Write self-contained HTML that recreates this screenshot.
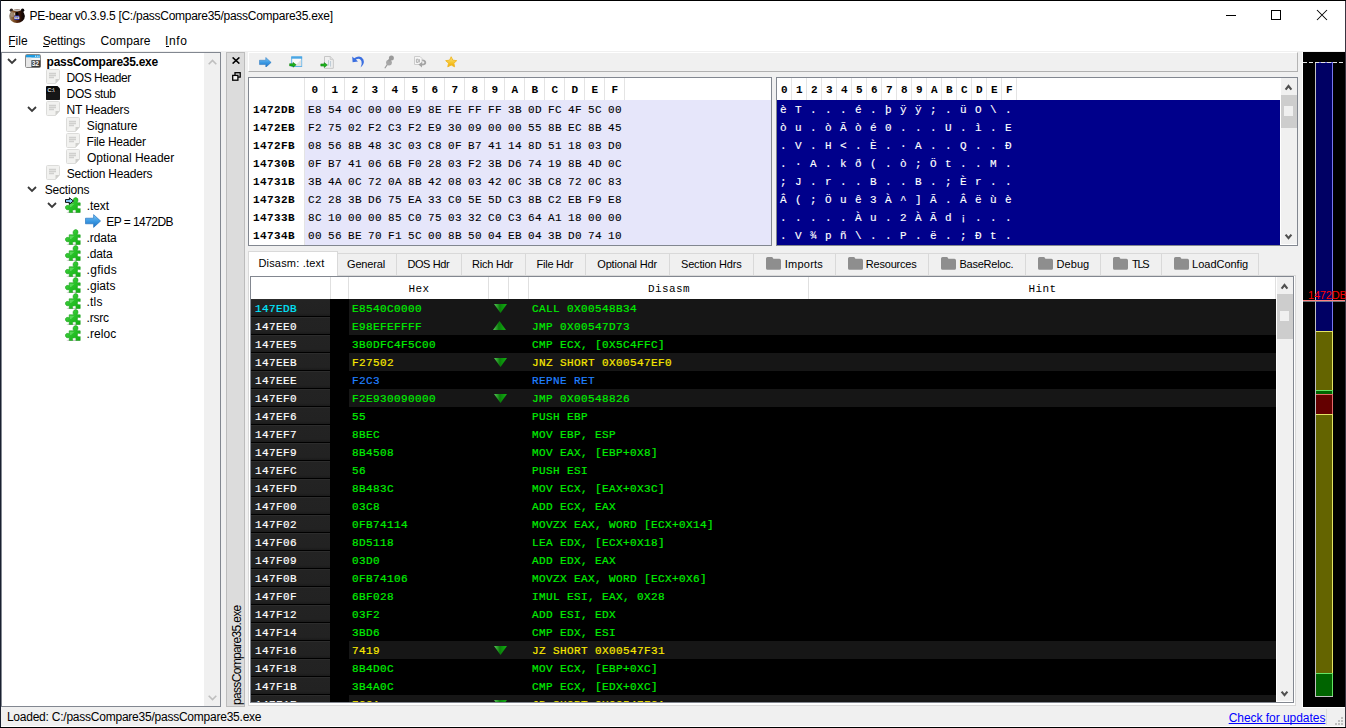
<!DOCTYPE html>
<html>
<head>
<meta charset="utf-8">
<title>PE-bear</title>
<style>
*{box-sizing:border-box;margin:0;padding:0}
html,body{width:1346px;height:728px;overflow:hidden;background:#f0f0f0;font-family:"Liberation Sans",sans-serif;font-size:12px;color:#000}
div,svg{position:absolute}
#win{left:0;top:0;width:1346px;height:728px;background:#f0f0f0;overflow:hidden}
.t{white-space:nowrap;font-size:12px;line-height:16px;height:16px}
.m{font-family:"Liberation Mono",monospace;white-space:nowrap;font-size:11px;letter-spacing:.4px;line-height:18px;height:18px}
.b{font-weight:bold}
.md{-webkit-text-stroke:.2px currentColor}
.h{-webkit-text-stroke:.1px #000}
.a{width:15px;text-align:center;color:#fff;-webkit-text-stroke:.15px #fff}
u{text-decoration:none;border-bottom:1px solid #000}
.ac{left:0;width:79px;height:17px;background:linear-gradient(#2c2c2c 0,#2c2c2c 1px,#232323 1px,#222 14px,#1b1b1b 17px)}
.sb{background:#f0f0f0}
.th{background:#cdcdcd}
</style>
</head>
<body>
<div id="win">

<div style="left:0;top:0;width:1346px;height:51px;background:#fff"></div>
<svg style="left:9px;top:8px" width="16" height="15" viewBox="0 0 16 15">
<defs><linearGradient id="bg" x1="0" y1="0" x2="1" y2="0"><stop offset="0" stop-color="#9a9286"/><stop offset=".25" stop-color="#86582c"/><stop offset=".55" stop-color="#52220a"/><stop offset=".8" stop-color="#1c0a04"/><stop offset="1" stop-color="#080202"/></linearGradient></defs>
<circle cx="2.4" cy="2.2" r="1.7" fill="#2a2220"/><circle cx="13.6" cy="2.2" r="1.7" fill="#0c0606"/>
<ellipse cx="8" cy="8.1" rx="7.9" ry="6.8" fill="url(#bg)"/>
<path d="M3.6 2.6 Q8 .6 12.4 2.6 Q8 4.2 3.6 2.6Z" fill="#c4c0bc"/>
<ellipse cx="3.6" cy="6.6" rx="2" ry="2.6" fill="#b0a898" opacity=".55"/>
<path d="M5.2 4.6 Q6.4 4 6.4 7 L5.4 7.6Z" fill="#f0ece4" opacity=".9"/>
<ellipse cx="8" cy="5.9" rx="1.6" ry="2.2" fill="#050202"/>
<rect x="5.3" y="7.5" width="5.1" height="4.6" rx="1.3" fill="#2c34b4"/>
<rect x="5.5" y="8.6" width="4.7" height="2.4" fill="#f6f6ff"/>
<rect x="6.5" y="9.2" width="1" height="1.3" fill="#222"/><rect x="8.3" y="9.2" width="1" height="1.3" fill="#222"/>
</svg>
<div class="t" style="left:29.62px;letter-spacing:-0.271px;top:8px;font-size:12px;">PE-bear v0.3.9.5 [C:/passCompare35/passCompare35.exe]</div>
<div style="left:1226px;top:15px;width:10px;height:1px;background:#000"></div>
<div style="left:1271px;top:10px;width:10px;height:10px;border:1px solid #000"></div>
<svg style="left:1316px;top:9px" width="12" height="12" viewBox="0 0 12 12"><path d="M1 1 L11 11 M11 1 L1 11" stroke="#000" stroke-width="1.05" fill="none"/></svg>
<div class="t" style="left:8.22px;letter-spacing:0.025px;top:33px;font-size:12px;">File</div>
<div style="left:9px;top:46px;width:6px;height:1px;background:#000"></div>
<div class="t" style="left:42.66px;letter-spacing:-0.112px;top:33px;font-size:12px;">Settings</div>
<div style="left:43px;top:46px;width:6px;height:1px;background:#000"></div>
<div class="t" style="left:100.59px;letter-spacing:0.097px;top:33px;font-size:12px;">Compare</div>
<div class="t" style="left:164.89px;letter-spacing:0.699px;top:33px;font-size:12px;">Info</div>
<div style="left:166px;top:46px;width:3px;height:1px;background:#000"></div>
<div style="left:1px;top:52px;width:220px;height:655px;background:#fff;border:1px solid #828790"></div>
<div class="sb" style="left:204px;top:53px;width:16px;height:653px"></div>
<svg style="left:208px;top:59px" width="9" height="6" viewBox="0 0 9 6"><path d="M0.7 5.2 L4.5 1.4 L8.3 5.2" stroke="#bfbfbf" stroke-width="1.6" fill="none"/></svg>
<svg style="left:208px;top:695px" width="9" height="6" viewBox="0 0 9 6"><path d="M0.7 0.8 L4.5 4.6 L8.3 0.8" stroke="#bfbfbf" stroke-width="1.6" fill="none"/></svg>
<svg style="left:7px;top:58px" width="10" height="7" viewBox="0 0 10 7"><path d="M1 1 L5 5 L9 1" stroke="#3a3a3a" stroke-width="1.8" fill="none"/></svg>
<svg style="left:25px;top:54px" width="16" height="14" viewBox="0 0 16 14"><rect x=".5" y=".5" width="15" height="13" rx="1.2" fill="#f4f4f4" stroke="#8c8c8c"/><rect x="1" y="1" width="14" height="2.6" fill="#1e9be0"/><rect x="10" y="1.7" width="1" height="1" fill="#fff"/><rect x="11.8" y="1.7" width="1" height="1" fill="#fff"/><rect x="13.5" y="1.7" width="1" height="1" fill="#fff"/><rect x="1" y="3.6" width="5.4" height="9.4" fill="#e6e6e6"/><rect x="6.4" y="6.2" width="9" height="7" fill="#3a3a3a"/><text x="6.8" y="12.2" font-family="Liberation Sans" font-size="6.6" font-weight="bold" fill="#fff" letter-spacing="-.2">32</text></svg>
<div class="t" style="left:46.61px;letter-spacing:-0.286px;top:54px;font-size:12px;font-weight:bold;">passCompare35.exe</div>
<svg style="left:46px;top:69.4px" width="14" height="15" viewBox="0 0 14 15"><path d="M1.5 .5 H12.5 Q13.5 .5 13.5 1.5 V10 L9.5 14.5 H1.5 Q.5 14.5 .5 13.5 V1.5 Q.5 .5 1.5 .5Z" fill="#f2f2f0" stroke="#dcdcda" stroke-width="1"/><path d="M13.5 10 L9.5 14.5 V10Z" fill="#cfcfcc"/><path d="M3 4.5H10M3 6.5H10M3 8.5H8" stroke="#d0d0ce" stroke-width="1.4"/></svg>
<div class="t" style="left:66.62px;letter-spacing:-0.458px;top:70px;font-size:12px;">DOS Header</div>
<svg style="left:46px;top:86px" width="14" height="14" viewBox="0 0 14 14"><path d="M1 0H11.5L14 2.5V13Q14 14 13 14H1Q0 14 0 13V1Q0 0 1 0Z" fill="#0a0a0a"/><path d="M0 8 L14 3 V13 Q14 14 13 14 H1 Q0 14 0 13Z" fill="#1c1c1c" opacity=".7"/><text x="1.6" y="5.6" font-family="Liberation Sans" font-size="5.2" font-weight="bold" fill="#e8e8e8">C:\</text></svg>
<div class="t" style="left:66.62px;letter-spacing:-0.378px;top:86px;font-size:12px;">DOS stub</div>
<svg style="left:27px;top:106px" width="10" height="7" viewBox="0 0 10 7"><path d="M1 1 L5 5 L9 1" stroke="#3a3a3a" stroke-width="1.8" fill="none"/></svg>
<svg style="left:46px;top:101.4px" width="14" height="15" viewBox="0 0 14 15"><path d="M1.5 .5 H12.5 Q13.5 .5 13.5 1.5 V10 L9.5 14.5 H1.5 Q.5 14.5 .5 13.5 V1.5 Q.5 .5 1.5 .5Z" fill="#f2f2f0" stroke="#dcdcda" stroke-width="1"/><path d="M13.5 10 L9.5 14.5 V10Z" fill="#cfcfcc"/><path d="M3 4.5H10M3 6.5H10M3 8.5H8" stroke="#d0d0ce" stroke-width="1.4"/></svg>
<div class="t" style="left:66.62px;letter-spacing:-0.185px;top:102px;font-size:12px;">NT Headers</div>
<svg style="left:66px;top:117.4px" width="14" height="15" viewBox="0 0 14 15"><path d="M1.5 .5 H12.5 Q13.5 .5 13.5 1.5 V10 L9.5 14.5 H1.5 Q.5 14.5 .5 13.5 V1.5 Q.5 .5 1.5 .5Z" fill="#f2f2f0" stroke="#dcdcda" stroke-width="1"/><path d="M13.5 10 L9.5 14.5 V10Z" fill="#cfcfcc"/><path d="M3 4.5H10M3 6.5H10M3 8.5H8" stroke="#d0d0ce" stroke-width="1.4"/></svg>
<div class="t" style="left:86.76px;letter-spacing:-0.075px;top:118px;font-size:12px;">Signature</div>
<svg style="left:66px;top:133.4px" width="14" height="15" viewBox="0 0 14 15"><path d="M1.5 .5 H12.5 Q13.5 .5 13.5 1.5 V10 L9.5 14.5 H1.5 Q.5 14.5 .5 13.5 V1.5 Q.5 .5 1.5 .5Z" fill="#f2f2f0" stroke="#dcdcda" stroke-width="1"/><path d="M13.5 10 L9.5 14.5 V10Z" fill="#cfcfcc"/><path d="M3 4.5H10M3 6.5H10M3 8.5H8" stroke="#d0d0ce" stroke-width="1.4"/></svg>
<div class="t" style="left:86.62px;letter-spacing:-0.265px;top:134px;font-size:12px;">File Header</div>
<svg style="left:66px;top:149.4px" width="14" height="15" viewBox="0 0 14 15"><path d="M1.5 .5 H12.5 Q13.5 .5 13.5 1.5 V10 L9.5 14.5 H1.5 Q.5 14.5 .5 13.5 V1.5 Q.5 .5 1.5 .5Z" fill="#f2f2f0" stroke="#dcdcda" stroke-width="1"/><path d="M13.5 10 L9.5 14.5 V10Z" fill="#cfcfcc"/><path d="M3 4.5H10M3 6.5H10M3 8.5H8" stroke="#d0d0ce" stroke-width="1.4"/></svg>
<div class="t" style="left:87.03px;letter-spacing:-0.009px;top:150px;font-size:12px;">Optional Header</div>
<svg style="left:46px;top:165.4px" width="14" height="15" viewBox="0 0 14 15"><path d="M1.5 .5 H12.5 Q13.5 .5 13.5 1.5 V10 L9.5 14.5 H1.5 Q.5 14.5 .5 13.5 V1.5 Q.5 .5 1.5 .5Z" fill="#f2f2f0" stroke="#dcdcda" stroke-width="1"/><path d="M13.5 10 L9.5 14.5 V10Z" fill="#cfcfcc"/><path d="M3 4.5H10M3 6.5H10M3 8.5H8" stroke="#d0d0ce" stroke-width="1.4"/></svg>
<div class="t" style="left:66.76px;letter-spacing:-0.217px;top:166px;font-size:12px;">Section Headers</div>
<svg style="left:27px;top:186px" width="10" height="7" viewBox="0 0 10 7"><path d="M1 1 L5 5 L9 1" stroke="#3a3a3a" stroke-width="1.8" fill="none"/></svg>
<div class="t" style="left:44.76px;letter-spacing:-0.193px;top:182px;font-size:12px;">Sections</div>
<svg style="left:47px;top:202px" width="10" height="7" viewBox="0 0 10 7"><path d="M1 1 L5 5 L9 1" stroke="#3a3a3a" stroke-width="1.8" fill="none"/></svg>
<svg style="left:65px;top:197px" width="16" height="16" viewBox="0 0 16 16"><defs><linearGradient id="pz10" x1="0" y1="0" x2="1" y2="1"><stop offset="0" stop-color="#5ce25c"/><stop offset=".45" stop-color="#2cc42c"/><stop offset="1" stop-color="#12b012"/></linearGradient></defs>
<ellipse cx="8.5" cy="15.5" rx="7" ry=".7" fill="#b0b0b0" opacity=".7"/>
<path d="M4.2 5.8 H8.9 Q7.6 4.4 8.2 2.6 Q9 .4 11 .6 Q13.2 1 13 3.2 Q12.8 4.8 12 5.8 H15.2 V8.6 Q13.6 7.6 12.6 8.8 Q11.8 10.4 13 11.6 Q14 12.2 15.2 11.6 V15.4 H10.8 Q11.6 13.6 10.2 12.8 Q8.4 12.4 7.6 13.6 Q7.2 14.4 7.8 15.4 H4.2 V12.2 Q2.8 13.2 1.4 12.4 Q-.1 11.2 .6 9.4 Q1.8 7.6 4.2 8.8Z" fill="url(#pz10)" stroke="#1ea01e" stroke-width=".6"/>
<path d="M5 6.8 H9.6 L6 10 H5Z" fill="#8cf08c" opacity=".45"/>
<path d="M.5 2.6H4.4V.8L8.4 4L4.4 7.2V5.4H.5Z" fill="#8cd0ff" stroke="#000" stroke-width=".95"/></svg>
<div class="t" style="left:86.70px;letter-spacing:-0.076px;top:198px;font-size:12px;">.text</div>
<svg style="left:85px;top:214px" width="16" height="14" viewBox="0 0 16 14"><defs><linearGradient id="ar11" x1="0" y1="0" x2="0" y2="1"><stop offset="0" stop-color="#7cc6f6"/><stop offset=".5" stop-color="#3c9ae4"/><stop offset="1" stop-color="#1c72c4"/></linearGradient></defs><path d="M.5 4.2 H8.6 V.6 L15.6 7 L8.6 13.4 V9.8 H.5Z" fill="url(#ar11)" stroke="#1a6ab8" stroke-width=".6"/></svg>
<div class="t" style="left:106.32px;letter-spacing:-0.563px;top:214px;font-size:12px;">EP = 1472DB</div>
<svg style="left:65px;top:229px" width="16" height="16" viewBox="0 0 16 16"><defs><linearGradient id="pz12" x1="0" y1="0" x2="1" y2="1"><stop offset="0" stop-color="#5ce25c"/><stop offset=".45" stop-color="#2cc42c"/><stop offset="1" stop-color="#12b012"/></linearGradient></defs>
<ellipse cx="8.5" cy="15.5" rx="7" ry=".7" fill="#b0b0b0" opacity=".7"/>
<path d="M4.2 5.8 H8.9 Q7.6 4.4 8.2 2.6 Q9 .4 11 .6 Q13.2 1 13 3.2 Q12.8 4.8 12 5.8 H15.2 V8.6 Q13.6 7.6 12.6 8.8 Q11.8 10.4 13 11.6 Q14 12.2 15.2 11.6 V15.4 H10.8 Q11.6 13.6 10.2 12.8 Q8.4 12.4 7.6 13.6 Q7.2 14.4 7.8 15.4 H4.2 V12.2 Q2.8 13.2 1.4 12.4 Q-.1 11.2 .6 9.4 Q1.8 7.6 4.2 8.8Z" fill="url(#pz12)" stroke="#1ea01e" stroke-width=".6"/>
<path d="M5 6.8 H9.6 L6 10 H5Z" fill="#8cf08c" opacity=".45"/>
</svg>
<div class="t" style="left:86.60px;letter-spacing:-0.098px;top:230px;font-size:12px;">.rdata</div>
<svg style="left:65px;top:245px" width="16" height="16" viewBox="0 0 16 16"><defs><linearGradient id="pz13" x1="0" y1="0" x2="1" y2="1"><stop offset="0" stop-color="#5ce25c"/><stop offset=".45" stop-color="#2cc42c"/><stop offset="1" stop-color="#12b012"/></linearGradient></defs>
<ellipse cx="8.5" cy="15.5" rx="7" ry=".7" fill="#b0b0b0" opacity=".7"/>
<path d="M4.2 5.8 H8.9 Q7.6 4.4 8.2 2.6 Q9 .4 11 .6 Q13.2 1 13 3.2 Q12.8 4.8 12 5.8 H15.2 V8.6 Q13.6 7.6 12.6 8.8 Q11.8 10.4 13 11.6 Q14 12.2 15.2 11.6 V15.4 H10.8 Q11.6 13.6 10.2 12.8 Q8.4 12.4 7.6 13.6 Q7.2 14.4 7.8 15.4 H4.2 V12.2 Q2.8 13.2 1.4 12.4 Q-.1 11.2 .6 9.4 Q1.8 7.6 4.2 8.8Z" fill="url(#pz13)" stroke="#1ea01e" stroke-width=".6"/>
<path d="M5 6.8 H9.6 L6 10 H5Z" fill="#8cf08c" opacity=".45"/>
</svg>
<div class="t" style="left:86.60px;letter-spacing:-0.152px;top:246px;font-size:12px;">.data</div>
<svg style="left:65px;top:261px" width="16" height="16" viewBox="0 0 16 16"><defs><linearGradient id="pz14" x1="0" y1="0" x2="1" y2="1"><stop offset="0" stop-color="#5ce25c"/><stop offset=".45" stop-color="#2cc42c"/><stop offset="1" stop-color="#12b012"/></linearGradient></defs>
<ellipse cx="8.5" cy="15.5" rx="7" ry=".7" fill="#b0b0b0" opacity=".7"/>
<path d="M4.2 5.8 H8.9 Q7.6 4.4 8.2 2.6 Q9 .4 11 .6 Q13.2 1 13 3.2 Q12.8 4.8 12 5.8 H15.2 V8.6 Q13.6 7.6 12.6 8.8 Q11.8 10.4 13 11.6 Q14 12.2 15.2 11.6 V15.4 H10.8 Q11.6 13.6 10.2 12.8 Q8.4 12.4 7.6 13.6 Q7.2 14.4 7.8 15.4 H4.2 V12.2 Q2.8 13.2 1.4 12.4 Q-.1 11.2 .6 9.4 Q1.8 7.6 4.2 8.8Z" fill="url(#pz14)" stroke="#1ea01e" stroke-width=".6"/>
<path d="M5 6.8 H9.6 L6 10 H5Z" fill="#8cf08c" opacity=".45"/>
</svg>
<div class="t" style="left:86.60px;letter-spacing:0.288px;top:262px;font-size:12px;">.gfids</div>
<svg style="left:65px;top:277px" width="16" height="16" viewBox="0 0 16 16"><defs><linearGradient id="pz15" x1="0" y1="0" x2="1" y2="1"><stop offset="0" stop-color="#5ce25c"/><stop offset=".45" stop-color="#2cc42c"/><stop offset="1" stop-color="#12b012"/></linearGradient></defs>
<ellipse cx="8.5" cy="15.5" rx="7" ry=".7" fill="#b0b0b0" opacity=".7"/>
<path d="M4.2 5.8 H8.9 Q7.6 4.4 8.2 2.6 Q9 .4 11 .6 Q13.2 1 13 3.2 Q12.8 4.8 12 5.8 H15.2 V8.6 Q13.6 7.6 12.6 8.8 Q11.8 10.4 13 11.6 Q14 12.2 15.2 11.6 V15.4 H10.8 Q11.6 13.6 10.2 12.8 Q8.4 12.4 7.6 13.6 Q7.2 14.4 7.8 15.4 H4.2 V12.2 Q2.8 13.2 1.4 12.4 Q-.1 11.2 .6 9.4 Q1.8 7.6 4.2 8.8Z" fill="url(#pz15)" stroke="#1ea01e" stroke-width=".6"/>
<path d="M5 6.8 H9.6 L6 10 H5Z" fill="#8cf08c" opacity=".45"/>
</svg>
<div class="t" style="left:86.60px;letter-spacing:0.028px;top:278px;font-size:12px;">.giats</div>
<svg style="left:65px;top:293px" width="16" height="16" viewBox="0 0 16 16"><defs><linearGradient id="pz16" x1="0" y1="0" x2="1" y2="1"><stop offset="0" stop-color="#5ce25c"/><stop offset=".45" stop-color="#2cc42c"/><stop offset="1" stop-color="#12b012"/></linearGradient></defs>
<ellipse cx="8.5" cy="15.5" rx="7" ry=".7" fill="#b0b0b0" opacity=".7"/>
<path d="M4.2 5.8 H8.9 Q7.6 4.4 8.2 2.6 Q9 .4 11 .6 Q13.2 1 13 3.2 Q12.8 4.8 12 5.8 H15.2 V8.6 Q13.6 7.6 12.6 8.8 Q11.8 10.4 13 11.6 Q14 12.2 15.2 11.6 V15.4 H10.8 Q11.6 13.6 10.2 12.8 Q8.4 12.4 7.6 13.6 Q7.2 14.4 7.8 15.4 H4.2 V12.2 Q2.8 13.2 1.4 12.4 Q-.1 11.2 .6 9.4 Q1.8 7.6 4.2 8.8Z" fill="url(#pz16)" stroke="#1ea01e" stroke-width=".6"/>
<path d="M5 6.8 H9.6 L6 10 H5Z" fill="#8cf08c" opacity=".45"/>
</svg>
<div class="t" style="left:86.60px;letter-spacing:0.162px;top:294px;font-size:12px;">.tls</div>
<svg style="left:65px;top:309px" width="16" height="16" viewBox="0 0 16 16"><defs><linearGradient id="pz17" x1="0" y1="0" x2="1" y2="1"><stop offset="0" stop-color="#5ce25c"/><stop offset=".45" stop-color="#2cc42c"/><stop offset="1" stop-color="#12b012"/></linearGradient></defs>
<ellipse cx="8.5" cy="15.5" rx="7" ry=".7" fill="#b0b0b0" opacity=".7"/>
<path d="M4.2 5.8 H8.9 Q7.6 4.4 8.2 2.6 Q9 .4 11 .6 Q13.2 1 13 3.2 Q12.8 4.8 12 5.8 H15.2 V8.6 Q13.6 7.6 12.6 8.8 Q11.8 10.4 13 11.6 Q14 12.2 15.2 11.6 V15.4 H10.8 Q11.6 13.6 10.2 12.8 Q8.4 12.4 7.6 13.6 Q7.2 14.4 7.8 15.4 H4.2 V12.2 Q2.8 13.2 1.4 12.4 Q-.1 11.2 .6 9.4 Q1.8 7.6 4.2 8.8Z" fill="url(#pz17)" stroke="#1ea01e" stroke-width=".6"/>
<path d="M5 6.8 H9.6 L6 10 H5Z" fill="#8cf08c" opacity=".45"/>
</svg>
<div class="t" style="left:86.60px;letter-spacing:-0.254px;top:310px;font-size:12px;">.rsrc</div>
<svg style="left:65px;top:325px" width="16" height="16" viewBox="0 0 16 16"><defs><linearGradient id="pz18" x1="0" y1="0" x2="1" y2="1"><stop offset="0" stop-color="#5ce25c"/><stop offset=".45" stop-color="#2cc42c"/><stop offset="1" stop-color="#12b012"/></linearGradient></defs>
<ellipse cx="8.5" cy="15.5" rx="7" ry=".7" fill="#b0b0b0" opacity=".7"/>
<path d="M4.2 5.8 H8.9 Q7.6 4.4 8.2 2.6 Q9 .4 11 .6 Q13.2 1 13 3.2 Q12.8 4.8 12 5.8 H15.2 V8.6 Q13.6 7.6 12.6 8.8 Q11.8 10.4 13 11.6 Q14 12.2 15.2 11.6 V15.4 H10.8 Q11.6 13.6 10.2 12.8 Q8.4 12.4 7.6 13.6 Q7.2 14.4 7.8 15.4 H4.2 V12.2 Q2.8 13.2 1.4 12.4 Q-.1 11.2 .6 9.4 Q1.8 7.6 4.2 8.8Z" fill="url(#pz18)" stroke="#1ea01e" stroke-width=".6"/>
<path d="M5 6.8 H9.6 L6 10 H5Z" fill="#8cf08c" opacity=".45"/>
</svg>
<div class="t" style="left:86.60px;letter-spacing:0.054px;top:326px;font-size:12px;">.reloc</div>
<div style="left:1px;top:726px;width:1344px;height:1px;background:#fff"></div>
<div class="t" style="left:6.92px;letter-spacing:-0.233px;top:709px;font-size:12px;">Loaded: C:/passCompare35/passCompare35.exe</div>
<div class="t" style="left:1228.69px;letter-spacing:-0.040px;top:710px;font-size:12px;color:#0000ff;text-decoration:underline;text-decoration-skip-ink:none;">Check for updates</div>
<div style="left:1326px;top:709px;width:1px;height:16px;background:#dcdcdc"></div>
<div style="left:1341px;top:723px;width:2px;height:2px;background:#bfbfbf"></div>
<div style="left:1338px;top:723px;width:2px;height:2px;background:#bfbfbf"></div>
<div style="left:1335px;top:723px;width:2px;height:2px;background:#bfbfbf"></div>
<div style="left:1341px;top:720px;width:2px;height:2px;background:#bfbfbf"></div>
<div style="left:1338px;top:720px;width:2px;height:2px;background:#bfbfbf"></div>
<div style="left:1341px;top:717px;width:2px;height:2px;background:#bfbfbf"></div>
<div style="left:226px;top:52px;width:19px;height:655px;background:#dcdcdc;border:1px solid #bcbcbc"></div>
<svg style="left:232px;top:57px" width="8" height="7" viewBox="0 0 8 7"><path d="M.6 .4L7.4 6.6M7.4 .4L.6 6.6" stroke="#000" stroke-width="1.5" fill="none"/></svg>
<svg style="left:231.6px;top:72px" width="9" height="9" viewBox="0 0 9 9"><rect x="3" y=".7" width="5.2" height="4.4" fill="#d9d9d9" stroke="#000" stroke-width="1.3"/><rect x=".7" y="3.4" width="5.2" height="4.8" fill="#f4f4f4" stroke="#000" stroke-width="1.3"/></svg>
<div class="t" style="left:229px;top:704.97px;letter-spacing:-0.658px;font-size:12px;transform-origin:0 0;transform:rotate(-90deg)">passCompare35.exe</div>
<div style="left:248px;top:52px;width:1050px;height:20px;background:#f0f0f0;border-top:1px solid #fff;border-left:1px solid #fff;border-bottom:1px solid #b0b0b0;border-right:1px solid #b4b4b4"></div>
<svg style="left:259px;top:56.6px" width="12.6" height="10.8" viewBox="0 0 16 14"><defs><linearGradient id="ar90" x1="0" y1="0" x2="0" y2="1"><stop offset="0" stop-color="#7cc6f6"/><stop offset=".5" stop-color="#3c9ae4"/><stop offset="1" stop-color="#1c72c4"/></linearGradient></defs><path d="M.5 4.2 H8.6 V.6 L15.6 7 L8.6 13.4 V9.8 H.5Z" fill="url(#ar90)" stroke="#1a6ab8" stroke-width=".6"/></svg>
<svg style="left:289px;top:56px" width="14" height="12" viewBox="0 0 14 12"><rect x="2.7" y=".9" width="10" height="9.6" fill="#fafafa" stroke="#58aee6" stroke-width=".9"/><rect x="2.3" y=".5" width="10.8" height="2.2" fill="#4aa6e4"/><path d="M6 10 L12.2 3.6 V10Z" fill="#e2e2e2"/><path d="M0.6 7.7h3.4v-1.3l3.2 2.4-3.2 2.4v-1.3h-3.4z" fill="#1cb41c" stroke="#0c780c" stroke-width=".5"/></svg>
<svg style="left:320px;top:56px" width="14" height="13" viewBox="0 0 14 13"><path d="M4.5 .5H10.2L13.3 3.6V12.3H4.5Z" fill="#f0f0f0" stroke="#c6c6c6"/><path d="M10.2 .5V3.6H13.3" fill="#dedede" stroke="#c6c6c6" stroke-width=".8"/><path d="M8.6 4.2V9.6M10.6 5V10.6" stroke="#b4c4d0" stroke-width=".9"/><path d="M0.8 7.9h3.4v-1.3l3.2 2.4-3.2 2.4v-1.3h-3.4z" fill="#1cb41c" stroke="#0c780c" stroke-width=".5"/></svg>
<svg style="left:351px;top:55px" width="14" height="14" viewBox="0 0 14 14"><path d="M1.2 1.4 L1.6 7.2 L7 6.4 L4.9 4.6 Q8.6 2.6 10.4 6 Q11.4 8.8 9.6 12.4 Q14 8.6 12.4 4.4 Q10 0 5 2.2 L3.2 3.2Z" fill="#3b6fe0"/></svg>
<svg style="left:384px;top:55px" width="11" height="14" viewBox="0 0 11 14"><circle cx="7.4" cy="3.1" r="2.5" fill="#9a9a9a"/><circle cx="5" cy="7.6" r="2.9" fill="#a6a6a6"/><path d="M6.2 4.4L4.6 6" stroke="#9a9a9a" stroke-width="2.4"/><path d="M3.2 9.6L.8 13.2" stroke="#9a9a9a" stroke-width="1.1"/></svg>
<svg style="left:414px;top:56px" width="13" height="12" viewBox="0 0 13 12"><path d="M.5 .5H6L8 2.5V8.5H.5Z" fill="#f6f6f6" stroke="#cccccc"/><path d="M2.4 3.2V6.4H4.2V3.2Z M5.4 3.2V6.4" stroke="#aaa" stroke-width=".9" fill="none"/><path d="M8.2 3.4 Q12.4 3.6 12.2 7 Q12 9.4 8 9.4 V11.4 L4.4 8.6 L8 6 V7.8 Q10.4 7.8 10.4 6.6 Q10.4 5 8.2 5Z" fill="#a4a4a4"/></svg>
<svg style="left:445px;top:56.4px" width="12.4" height="11.4" viewBox="0 0 13 12"><defs><linearGradient id="st" x1="0" y1="0" x2="0" y2="1"><stop offset="0" stop-color="#fae27e"/><stop offset=".55" stop-color="#f6c832"/><stop offset="1" stop-color="#f0a800"/></linearGradient></defs><path d="M6.5 .8 L8.2 4.4 L12.3 4.9 L9.3 7.6 L10.1 11.4 L6.5 9.5 L2.9 11.4 L3.7 7.6 L.7 4.9 L4.8 4.4Z" fill="url(#st)" stroke="#f0b828" stroke-width="1" stroke-linejoin="round"/></svg>
<div style="left:248px;top:77px;width:524px;height:169px;background:#fff;border:1px solid #828790"></div>
<div style="left:249px;top:78px;width:522px;height:167px;overflow:hidden">
<div style="left:56px;top:22px;width:466px;height:150px;background:#e6e6fa"></div>
<div style="left:55px;top:0;width:1px;height:167px;background:#e4e4e4"></div>
<div class="m b" style="left:56px;top:3px;width:20px;text-align:center">0</div>
<div style="left:75px;top:0;width:1px;height:22px;background:#e4e4e4"></div>
<div class="m b" style="left:76px;top:3px;width:20px;text-align:center">1</div>
<div style="left:95px;top:0;width:1px;height:22px;background:#e4e4e4"></div>
<div class="m b" style="left:96px;top:3px;width:20px;text-align:center">2</div>
<div style="left:115px;top:0;width:1px;height:22px;background:#e4e4e4"></div>
<div class="m b" style="left:116px;top:3px;width:20px;text-align:center">3</div>
<div style="left:135px;top:0;width:1px;height:22px;background:#e4e4e4"></div>
<div class="m b" style="left:136px;top:3px;width:20px;text-align:center">4</div>
<div style="left:155px;top:0;width:1px;height:22px;background:#e4e4e4"></div>
<div class="m b" style="left:156px;top:3px;width:20px;text-align:center">5</div>
<div style="left:175px;top:0;width:1px;height:22px;background:#e4e4e4"></div>
<div class="m b" style="left:176px;top:3px;width:20px;text-align:center">6</div>
<div style="left:195px;top:0;width:1px;height:22px;background:#e4e4e4"></div>
<div class="m b" style="left:196px;top:3px;width:20px;text-align:center">7</div>
<div style="left:215px;top:0;width:1px;height:22px;background:#e4e4e4"></div>
<div class="m b" style="left:216px;top:3px;width:20px;text-align:center">8</div>
<div style="left:235px;top:0;width:1px;height:22px;background:#e4e4e4"></div>
<div class="m b" style="left:236px;top:3px;width:20px;text-align:center">9</div>
<div style="left:255px;top:0;width:1px;height:22px;background:#e4e4e4"></div>
<div class="m b" style="left:256px;top:3px;width:20px;text-align:center">A</div>
<div style="left:275px;top:0;width:1px;height:22px;background:#e4e4e4"></div>
<div class="m b" style="left:276px;top:3px;width:20px;text-align:center">B</div>
<div style="left:295px;top:0;width:1px;height:22px;background:#e4e4e4"></div>
<div class="m b" style="left:296px;top:3px;width:20px;text-align:center">C</div>
<div style="left:315px;top:0;width:1px;height:22px;background:#e4e4e4"></div>
<div class="m b" style="left:316px;top:3px;width:20px;text-align:center">D</div>
<div style="left:335px;top:0;width:1px;height:22px;background:#e4e4e4"></div>
<div class="m b" style="left:336px;top:3px;width:20px;text-align:center">E</div>
<div style="left:355px;top:0;width:1px;height:22px;background:#e4e4e4"></div>
<div class="m b" style="left:356px;top:3px;width:20px;text-align:center">F</div>
<div style="left:375px;top:0;width:1px;height:22px;background:#e4e4e4"></div>
<div class="m b" style="left:4px;top:23px">1472DB</div>
<div class="m h" style="left:59px;top:23px">E8</div>
<div class="m h" style="left:79px;top:23px">54</div>
<div class="m h" style="left:99px;top:23px">0C</div>
<div class="m h" style="left:119px;top:23px">00</div>
<div class="m h" style="left:139px;top:23px">00</div>
<div class="m h" style="left:159px;top:23px">E9</div>
<div class="m h" style="left:179px;top:23px">8E</div>
<div class="m h" style="left:199px;top:23px">FE</div>
<div class="m h" style="left:219px;top:23px">FF</div>
<div class="m h" style="left:239px;top:23px">FF</div>
<div class="m h" style="left:259px;top:23px">3B</div>
<div class="m h" style="left:279px;top:23px">0D</div>
<div class="m h" style="left:299px;top:23px">FC</div>
<div class="m h" style="left:319px;top:23px">4F</div>
<div class="m h" style="left:339px;top:23px">5C</div>
<div class="m h" style="left:359px;top:23px">00</div>
<div class="m b" style="left:4px;top:41px">1472EB</div>
<div class="m h" style="left:59px;top:41px">F2</div>
<div class="m h" style="left:79px;top:41px">75</div>
<div class="m h" style="left:99px;top:41px">02</div>
<div class="m h" style="left:119px;top:41px">F2</div>
<div class="m h" style="left:139px;top:41px">C3</div>
<div class="m h" style="left:159px;top:41px">F2</div>
<div class="m h" style="left:179px;top:41px">E9</div>
<div class="m h" style="left:199px;top:41px">30</div>
<div class="m h" style="left:219px;top:41px">09</div>
<div class="m h" style="left:239px;top:41px">00</div>
<div class="m h" style="left:259px;top:41px">00</div>
<div class="m h" style="left:279px;top:41px">55</div>
<div class="m h" style="left:299px;top:41px">8B</div>
<div class="m h" style="left:319px;top:41px">EC</div>
<div class="m h" style="left:339px;top:41px">8B</div>
<div class="m h" style="left:359px;top:41px">45</div>
<div class="m b" style="left:4px;top:59px">1472FB</div>
<div class="m h" style="left:59px;top:59px">08</div>
<div class="m h" style="left:79px;top:59px">56</div>
<div class="m h" style="left:99px;top:59px">8B</div>
<div class="m h" style="left:119px;top:59px">48</div>
<div class="m h" style="left:139px;top:59px">3C</div>
<div class="m h" style="left:159px;top:59px">03</div>
<div class="m h" style="left:179px;top:59px">C8</div>
<div class="m h" style="left:199px;top:59px">0F</div>
<div class="m h" style="left:219px;top:59px">B7</div>
<div class="m h" style="left:239px;top:59px">41</div>
<div class="m h" style="left:259px;top:59px">14</div>
<div class="m h" style="left:279px;top:59px">8D</div>
<div class="m h" style="left:299px;top:59px">51</div>
<div class="m h" style="left:319px;top:59px">18</div>
<div class="m h" style="left:339px;top:59px">03</div>
<div class="m h" style="left:359px;top:59px">D0</div>
<div class="m b" style="left:4px;top:77px">14730B</div>
<div class="m h" style="left:59px;top:77px">0F</div>
<div class="m h" style="left:79px;top:77px">B7</div>
<div class="m h" style="left:99px;top:77px">41</div>
<div class="m h" style="left:119px;top:77px">06</div>
<div class="m h" style="left:139px;top:77px">6B</div>
<div class="m h" style="left:159px;top:77px">F0</div>
<div class="m h" style="left:179px;top:77px">28</div>
<div class="m h" style="left:199px;top:77px">03</div>
<div class="m h" style="left:219px;top:77px">F2</div>
<div class="m h" style="left:239px;top:77px">3B</div>
<div class="m h" style="left:259px;top:77px">D6</div>
<div class="m h" style="left:279px;top:77px">74</div>
<div class="m h" style="left:299px;top:77px">19</div>
<div class="m h" style="left:319px;top:77px">8B</div>
<div class="m h" style="left:339px;top:77px">4D</div>
<div class="m h" style="left:359px;top:77px">0C</div>
<div class="m b" style="left:4px;top:95px">14731B</div>
<div class="m h" style="left:59px;top:95px">3B</div>
<div class="m h" style="left:79px;top:95px">4A</div>
<div class="m h" style="left:99px;top:95px">0C</div>
<div class="m h" style="left:119px;top:95px">72</div>
<div class="m h" style="left:139px;top:95px">0A</div>
<div class="m h" style="left:159px;top:95px">8B</div>
<div class="m h" style="left:179px;top:95px">42</div>
<div class="m h" style="left:199px;top:95px">08</div>
<div class="m h" style="left:219px;top:95px">03</div>
<div class="m h" style="left:239px;top:95px">42</div>
<div class="m h" style="left:259px;top:95px">0C</div>
<div class="m h" style="left:279px;top:95px">3B</div>
<div class="m h" style="left:299px;top:95px">C8</div>
<div class="m h" style="left:319px;top:95px">72</div>
<div class="m h" style="left:339px;top:95px">0C</div>
<div class="m h" style="left:359px;top:95px">83</div>
<div class="m b" style="left:4px;top:113px">14732B</div>
<div class="m h" style="left:59px;top:113px">C2</div>
<div class="m h" style="left:79px;top:113px">28</div>
<div class="m h" style="left:99px;top:113px">3B</div>
<div class="m h" style="left:119px;top:113px">D6</div>
<div class="m h" style="left:139px;top:113px">75</div>
<div class="m h" style="left:159px;top:113px">EA</div>
<div class="m h" style="left:179px;top:113px">33</div>
<div class="m h" style="left:199px;top:113px">C0</div>
<div class="m h" style="left:219px;top:113px">5E</div>
<div class="m h" style="left:239px;top:113px">5D</div>
<div class="m h" style="left:259px;top:113px">C3</div>
<div class="m h" style="left:279px;top:113px">8B</div>
<div class="m h" style="left:299px;top:113px">C2</div>
<div class="m h" style="left:319px;top:113px">EB</div>
<div class="m h" style="left:339px;top:113px">F9</div>
<div class="m h" style="left:359px;top:113px">E8</div>
<div class="m b" style="left:4px;top:131px">14733B</div>
<div class="m h" style="left:59px;top:131px">8C</div>
<div class="m h" style="left:79px;top:131px">10</div>
<div class="m h" style="left:99px;top:131px">00</div>
<div class="m h" style="left:119px;top:131px">00</div>
<div class="m h" style="left:139px;top:131px">85</div>
<div class="m h" style="left:159px;top:131px">C0</div>
<div class="m h" style="left:179px;top:131px">75</div>
<div class="m h" style="left:199px;top:131px">03</div>
<div class="m h" style="left:219px;top:131px">32</div>
<div class="m h" style="left:239px;top:131px">C0</div>
<div class="m h" style="left:259px;top:131px">C3</div>
<div class="m h" style="left:279px;top:131px">64</div>
<div class="m h" style="left:299px;top:131px">A1</div>
<div class="m h" style="left:319px;top:131px">18</div>
<div class="m h" style="left:339px;top:131px">00</div>
<div class="m h" style="left:359px;top:131px">00</div>
<div class="m b" style="left:4px;top:149px">14734B</div>
<div class="m h" style="left:59px;top:149px">00</div>
<div class="m h" style="left:79px;top:149px">56</div>
<div class="m h" style="left:99px;top:149px">BE</div>
<div class="m h" style="left:119px;top:149px">70</div>
<div class="m h" style="left:139px;top:149px">F1</div>
<div class="m h" style="left:159px;top:149px">5C</div>
<div class="m h" style="left:179px;top:149px">00</div>
<div class="m h" style="left:199px;top:149px">8B</div>
<div class="m h" style="left:219px;top:149px">50</div>
<div class="m h" style="left:239px;top:149px">04</div>
<div class="m h" style="left:259px;top:149px">EB</div>
<div class="m h" style="left:279px;top:149px">04</div>
<div class="m h" style="left:299px;top:149px">3B</div>
<div class="m h" style="left:319px;top:149px">D0</div>
<div class="m h" style="left:339px;top:149px">74</div>
<div class="m h" style="left:359px;top:149px">10</div>
</div>
<div style="left:776px;top:77px;width:522px;height:169px;background:#fff;border:1px solid #828790"></div>
<div style="left:777px;top:78px;width:504px;height:167px;overflow:hidden">
<div style="left:0;top:22px;width:503px;height:150px;background:#00008b"></div>
<div style="left:14px;top:0;width:1px;height:22px;background:#e4e4e4"></div>
<div class="m b" style="left:0px;top:3px;width:15px;text-align:center">0</div>
<div style="left:29px;top:0;width:1px;height:22px;background:#e4e4e4"></div>
<div class="m b" style="left:15px;top:3px;width:15px;text-align:center">1</div>
<div style="left:44px;top:0;width:1px;height:22px;background:#e4e4e4"></div>
<div class="m b" style="left:30px;top:3px;width:15px;text-align:center">2</div>
<div style="left:59px;top:0;width:1px;height:22px;background:#e4e4e4"></div>
<div class="m b" style="left:45px;top:3px;width:15px;text-align:center">3</div>
<div style="left:74px;top:0;width:1px;height:22px;background:#e4e4e4"></div>
<div class="m b" style="left:60px;top:3px;width:15px;text-align:center">4</div>
<div style="left:89px;top:0;width:1px;height:22px;background:#e4e4e4"></div>
<div class="m b" style="left:75px;top:3px;width:15px;text-align:center">5</div>
<div style="left:104px;top:0;width:1px;height:22px;background:#e4e4e4"></div>
<div class="m b" style="left:90px;top:3px;width:15px;text-align:center">6</div>
<div style="left:119px;top:0;width:1px;height:22px;background:#e4e4e4"></div>
<div class="m b" style="left:105px;top:3px;width:15px;text-align:center">7</div>
<div style="left:134px;top:0;width:1px;height:22px;background:#e4e4e4"></div>
<div class="m b" style="left:120px;top:3px;width:15px;text-align:center">8</div>
<div style="left:149px;top:0;width:1px;height:22px;background:#e4e4e4"></div>
<div class="m b" style="left:135px;top:3px;width:15px;text-align:center">9</div>
<div style="left:164px;top:0;width:1px;height:22px;background:#e4e4e4"></div>
<div class="m b" style="left:150px;top:3px;width:15px;text-align:center">A</div>
<div style="left:179px;top:0;width:1px;height:22px;background:#e4e4e4"></div>
<div class="m b" style="left:165px;top:3px;width:15px;text-align:center">B</div>
<div style="left:194px;top:0;width:1px;height:22px;background:#e4e4e4"></div>
<div class="m b" style="left:180px;top:3px;width:15px;text-align:center">C</div>
<div style="left:209px;top:0;width:1px;height:22px;background:#e4e4e4"></div>
<div class="m b" style="left:195px;top:3px;width:15px;text-align:center">D</div>
<div style="left:224px;top:0;width:1px;height:22px;background:#e4e4e4"></div>
<div class="m b" style="left:210px;top:3px;width:15px;text-align:center">E</div>
<div style="left:239px;top:0;width:1px;height:22px;background:#e4e4e4"></div>
<div class="m b" style="left:225px;top:3px;width:15px;text-align:center">F</div>
<div class="m a" style="left:-1px;top:23px">è</div>
<div class="m a" style="left:14px;top:23px">T</div>
<div class="m a" style="left:29px;top:23px">.</div>
<div class="m a" style="left:44px;top:23px">.</div>
<div class="m a" style="left:59px;top:23px">.</div>
<div class="m a" style="left:74px;top:23px">é</div>
<div class="m a" style="left:89px;top:23px">.</div>
<div class="m a" style="left:104px;top:23px">þ</div>
<div class="m a" style="left:119px;top:23px">ÿ</div>
<div class="m a" style="left:134px;top:23px">ÿ</div>
<div class="m a" style="left:149px;top:23px">;</div>
<div class="m a" style="left:164px;top:23px">.</div>
<div class="m a" style="left:179px;top:23px">ü</div>
<div class="m a" style="left:194px;top:23px">O</div>
<div class="m a" style="left:209px;top:23px">\</div>
<div class="m a" style="left:224px;top:23px">.</div>
<div class="m a" style="left:-1px;top:41px">ò</div>
<div class="m a" style="left:14px;top:41px">u</div>
<div class="m a" style="left:29px;top:41px">.</div>
<div class="m a" style="left:44px;top:41px">ò</div>
<div class="m a" style="left:59px;top:41px">Ã</div>
<div class="m a" style="left:74px;top:41px">ò</div>
<div class="m a" style="left:89px;top:41px">é</div>
<div class="m a" style="left:104px;top:41px">0</div>
<div class="m a" style="left:119px;top:41px">.</div>
<div class="m a" style="left:134px;top:41px">.</div>
<div class="m a" style="left:149px;top:41px">.</div>
<div class="m a" style="left:164px;top:41px">U</div>
<div class="m a" style="left:179px;top:41px">.</div>
<div class="m a" style="left:194px;top:41px">ì</div>
<div class="m a" style="left:209px;top:41px">.</div>
<div class="m a" style="left:224px;top:41px">E</div>
<div class="m a" style="left:-1px;top:59px">.</div>
<div class="m a" style="left:14px;top:59px">V</div>
<div class="m a" style="left:29px;top:59px">.</div>
<div class="m a" style="left:44px;top:59px">H</div>
<div class="m a" style="left:59px;top:59px">&lt;</div>
<div class="m a" style="left:74px;top:59px">.</div>
<div class="m a" style="left:89px;top:59px">È</div>
<div class="m a" style="left:104px;top:59px">.</div>
<div class="m a" style="left:119px;top:59px">·</div>
<div class="m a" style="left:134px;top:59px">A</div>
<div class="m a" style="left:149px;top:59px">.</div>
<div class="m a" style="left:164px;top:59px">.</div>
<div class="m a" style="left:179px;top:59px">Q</div>
<div class="m a" style="left:194px;top:59px">.</div>
<div class="m a" style="left:209px;top:59px">.</div>
<div class="m a" style="left:224px;top:59px">Ð</div>
<div class="m a" style="left:-1px;top:77px">.</div>
<div class="m a" style="left:14px;top:77px">·</div>
<div class="m a" style="left:29px;top:77px">A</div>
<div class="m a" style="left:44px;top:77px">.</div>
<div class="m a" style="left:59px;top:77px">k</div>
<div class="m a" style="left:74px;top:77px">ð</div>
<div class="m a" style="left:89px;top:77px">(</div>
<div class="m a" style="left:104px;top:77px">.</div>
<div class="m a" style="left:119px;top:77px">ò</div>
<div class="m a" style="left:134px;top:77px">;</div>
<div class="m a" style="left:149px;top:77px">Ö</div>
<div class="m a" style="left:164px;top:77px">t</div>
<div class="m a" style="left:179px;top:77px">.</div>
<div class="m a" style="left:194px;top:77px">.</div>
<div class="m a" style="left:209px;top:77px">M</div>
<div class="m a" style="left:224px;top:77px">.</div>
<div class="m a" style="left:-1px;top:95px">;</div>
<div class="m a" style="left:14px;top:95px">J</div>
<div class="m a" style="left:29px;top:95px">.</div>
<div class="m a" style="left:44px;top:95px">r</div>
<div class="m a" style="left:59px;top:95px">.</div>
<div class="m a" style="left:74px;top:95px">.</div>
<div class="m a" style="left:89px;top:95px">B</div>
<div class="m a" style="left:104px;top:95px">.</div>
<div class="m a" style="left:119px;top:95px">.</div>
<div class="m a" style="left:134px;top:95px">B</div>
<div class="m a" style="left:149px;top:95px">.</div>
<div class="m a" style="left:164px;top:95px">;</div>
<div class="m a" style="left:179px;top:95px">È</div>
<div class="m a" style="left:194px;top:95px">r</div>
<div class="m a" style="left:209px;top:95px">.</div>
<div class="m a" style="left:224px;top:95px">.</div>
<div class="m a" style="left:-1px;top:113px">Â</div>
<div class="m a" style="left:14px;top:113px">(</div>
<div class="m a" style="left:29px;top:113px">;</div>
<div class="m a" style="left:44px;top:113px">Ö</div>
<div class="m a" style="left:59px;top:113px">u</div>
<div class="m a" style="left:74px;top:113px">ê</div>
<div class="m a" style="left:89px;top:113px">3</div>
<div class="m a" style="left:104px;top:113px">À</div>
<div class="m a" style="left:119px;top:113px">^</div>
<div class="m a" style="left:134px;top:113px">]</div>
<div class="m a" style="left:149px;top:113px">Ã</div>
<div class="m a" style="left:164px;top:113px">.</div>
<div class="m a" style="left:179px;top:113px">Â</div>
<div class="m a" style="left:194px;top:113px">ë</div>
<div class="m a" style="left:209px;top:113px">ù</div>
<div class="m a" style="left:224px;top:113px">è</div>
<div class="m a" style="left:-1px;top:131px">.</div>
<div class="m a" style="left:14px;top:131px">.</div>
<div class="m a" style="left:29px;top:131px">.</div>
<div class="m a" style="left:44px;top:131px">.</div>
<div class="m a" style="left:59px;top:131px">.</div>
<div class="m a" style="left:74px;top:131px">À</div>
<div class="m a" style="left:89px;top:131px">u</div>
<div class="m a" style="left:104px;top:131px">.</div>
<div class="m a" style="left:119px;top:131px">2</div>
<div class="m a" style="left:134px;top:131px">À</div>
<div class="m a" style="left:149px;top:131px">Ã</div>
<div class="m a" style="left:164px;top:131px">d</div>
<div class="m a" style="left:179px;top:131px">¡</div>
<div class="m a" style="left:194px;top:131px">.</div>
<div class="m a" style="left:209px;top:131px">.</div>
<div class="m a" style="left:224px;top:131px">.</div>
<div class="m a" style="left:-1px;top:149px">.</div>
<div class="m a" style="left:14px;top:149px">V</div>
<div class="m a" style="left:29px;top:149px">¾</div>
<div class="m a" style="left:44px;top:149px">p</div>
<div class="m a" style="left:59px;top:149px">ñ</div>
<div class="m a" style="left:74px;top:149px">\</div>
<div class="m a" style="left:89px;top:149px">.</div>
<div class="m a" style="left:104px;top:149px">.</div>
<div class="m a" style="left:119px;top:149px">P</div>
<div class="m a" style="left:134px;top:149px">.</div>
<div class="m a" style="left:149px;top:149px">ë</div>
<div class="m a" style="left:164px;top:149px">.</div>
<div class="m a" style="left:179px;top:149px">;</div>
<div class="m a" style="left:194px;top:149px">Ð</div>
<div class="m a" style="left:209px;top:149px">t</div>
<div class="m a" style="left:224px;top:149px">.</div>
</div>
<div class="sb" style="left:1281px;top:78px;width:16px;height:167px"></div>
<svg style="left:1284px;top:83.5px" width="9" height="7" viewBox="0 0 9 7"><path d="M1.6 5.6 L4.5 2 L7.4 5.6" stroke="#505050" stroke-width="2.1" fill="none"/></svg>
<svg style="left:1284px;top:233px" width="9" height="7" viewBox="0 0 9 7"><path d="M1.6 1.6 L4.5 5.2 L7.4 1.6" stroke="#505050" stroke-width="2.1" fill="none"/></svg>
<div style="left:1280px;top:244px;width:17px;height:1px;background:#fff"></div>
<div class="th" style="left:1281px;top:95px;width:16px;height:33px"></div>
<div style="left:1284px;top:106px;width:9px;height:10px;background:#f0f0f0"></div>
<div style="left:248px;top:275px;width:1048px;height:431px;background:#fff;border:1px solid #d9d9d9"></div>
<div style="left:337px;top:253px;width:60px;height:22px;background:#f0f0f0;border:1px solid #d9d9d9;border-bottom:none"></div>
<div class="t" style="left:347.05px;letter-spacing:-0.175px;top:256px;font-size:11px;">General</div>
<div style="left:396px;top:253px;width:66px;height:22px;background:#f0f0f0;border:1px solid #d9d9d9;border-bottom:none"></div>
<div class="t" style="left:407.40px;letter-spacing:-0.390px;top:256px;font-size:11px;">DOS Hdr</div>
<div style="left:461px;top:253px;width:65px;height:22px;background:#f0f0f0;border:1px solid #d9d9d9;border-bottom:none"></div>
<div class="t" style="left:472.00px;letter-spacing:-0.230px;top:256px;font-size:11px;">Rich Hdr</div>
<div style="left:525px;top:253px;width:61px;height:22px;background:#f0f0f0;border:1px solid #d9d9d9;border-bottom:none"></div>
<div class="t" style="left:536.50px;letter-spacing:-0.233px;top:256px;font-size:11px;">File Hdr</div>
<div style="left:585px;top:253px;width:85px;height:22px;background:#f0f0f0;border:1px solid #d9d9d9;border-bottom:none"></div>
<div class="t" style="left:597.28px;letter-spacing:-0.169px;top:256px;font-size:11px;">Optional Hdr</div>
<div style="left:669px;top:253px;width:85px;height:22px;background:#f0f0f0;border:1px solid #d9d9d9;border-bottom:none"></div>
<div class="t" style="left:681.10px;letter-spacing:-0.217px;top:256px;font-size:11px;">Section Hdrs</div>
<div style="left:753px;top:253px;width:83px;height:22px;background:#f0f0f0;border:1px solid #d9d9d9;border-bottom:none"></div>
<svg style="left:766px;top:257px" width="15" height="13" viewBox="0 0 15 13"><path d="M1.6 0H5.6Q6.6 0 7 .9L7.4 1.8H13.4Q15 1.8 15 3.4V11.2Q15 12.8 13.4 12.8H1.6Q0 12.8 0 11.2V1.6Q0 0 1.6 0Z" fill="#8e8e8e"/></svg>
<div class="t" style="left:784.68px;letter-spacing:0.254px;top:256px;font-size:11px;">Imports</div>
<div style="left:835px;top:253px;width:94px;height:22px;background:#f0f0f0;border:1px solid #d9d9d9;border-bottom:none"></div>
<svg style="left:848px;top:257px" width="15" height="13" viewBox="0 0 15 13"><path d="M1.6 0H5.6Q6.6 0 7 .9L7.4 1.8H13.4Q15 1.8 15 3.4V11.2Q15 12.8 13.4 12.8H1.6Q0 12.8 0 11.2V1.6Q0 0 1.6 0Z" fill="#8e8e8e"/></svg>
<div class="t" style="left:865.70px;letter-spacing:-0.185px;top:256px;font-size:11px;">Resources</div>
<div style="left:928px;top:253px;width:98px;height:22px;background:#f0f0f0;border:1px solid #d9d9d9;border-bottom:none"></div>
<svg style="left:941px;top:257px" width="15" height="13" viewBox="0 0 15 13"><path d="M1.6 0H5.6Q6.6 0 7 .9L7.4 1.8H13.4Q15 1.8 15 3.4V11.2Q15 12.8 13.4 12.8H1.6Q0 12.8 0 11.2V1.6Q0 0 1.6 0Z" fill="#8e8e8e"/></svg>
<div class="t" style="left:959.50px;letter-spacing:-0.240px;top:256px;font-size:11px;">BaseReloc.</div>
<div style="left:1025px;top:253px;width:76px;height:22px;background:#f0f0f0;border:1px solid #d9d9d9;border-bottom:none"></div>
<svg style="left:1038px;top:257px" width="15" height="13" viewBox="0 0 15 13"><path d="M1.6 0H5.6Q6.6 0 7 .9L7.4 1.8H13.4Q15 1.8 15 3.4V11.2Q15 12.8 13.4 12.8H1.6Q0 12.8 0 11.2V1.6Q0 0 1.6 0Z" fill="#8e8e8e"/></svg>
<div class="t" style="left:1056.60px;letter-spacing:0.047px;top:256px;font-size:11px;">Debug</div>
<div style="left:1100px;top:253px;width:62px;height:22px;background:#f0f0f0;border:1px solid #d9d9d9;border-bottom:none"></div>
<svg style="left:1113px;top:257px" width="15" height="13" viewBox="0 0 15 13"><path d="M1.6 0H5.6Q6.6 0 7 .9L7.4 1.8H13.4Q15 1.8 15 3.4V11.2Q15 12.8 13.4 12.8H1.6Q0 12.8 0 11.2V1.6Q0 0 1.6 0Z" fill="#8e8e8e"/></svg>
<div class="t" style="left:1132.05px;letter-spacing:-1.268px;top:256px;font-size:11px;">TLS</div>
<div style="left:1161px;top:253px;width:98px;height:22px;background:#f0f0f0;border:1px solid #d9d9d9;border-bottom:none"></div>
<svg style="left:1174px;top:257px" width="15" height="13" viewBox="0 0 15 13"><path d="M1.6 0H5.6Q6.6 0 7 .9L7.4 1.8H13.4Q15 1.8 15 3.4V11.2Q15 12.8 13.4 12.8H1.6Q0 12.8 0 11.2V1.6Q0 0 1.6 0Z" fill="#8e8e8e"/></svg>
<div class="t" style="left:1192.10px;letter-spacing:-0.019px;top:256px;font-size:11px;">LoadConfig</div>
<div style="left:248px;top:251px;width:90px;height:25px;background:#fff;border:1px solid #d9d9d9;border-bottom:none"></div>
<div class="t" style="left:258.40px;letter-spacing:0.192px;top:255px;font-size:11px;">Disasm: .text</div>
<div style="left:250px;top:276px;width:1044px;height:427px;background:#fff;border:1px solid #828790"></div>
<div style="left:330px;top:277px;width:1px;height:22px;background:#e0e0e0"></div>
<div style="left:348px;top:277px;width:1px;height:22px;background:#e0e0e0"></div>
<div style="left:488px;top:277px;width:1px;height:22px;background:#e0e0e0"></div>
<div class="m" style="left:349px;top:280px;width:140px;text-align:center">Hex</div>
<div style="left:508px;top:277px;width:1px;height:22px;background:#e0e0e0"></div>
<div style="left:528px;top:277px;width:1px;height:22px;background:#e0e0e0"></div>
<div style="left:808px;top:277px;width:1px;height:22px;background:#e0e0e0"></div>
<div class="m" style="left:529px;top:280px;width:280px;text-align:center">Disasm</div>
<div style="left:1275px;top:277px;width:1px;height:22px;background:#e0e0e0"></div>
<div class="m" style="left:809px;top:280px;width:467px;text-align:center">Hint</div>
<div style="left:251px;top:299px;width:1025px;height:403px;background:#000;overflow:hidden">
<svg width="0" height="0"><defs><linearGradient id="tg" x1="0" y1="0" x2="1" y2="0"><stop offset="0" stop-color="#58cc58"/><stop offset=".45" stop-color="#0a7c0a"/><stop offset=".55" stop-color="#0a8a0a"/><stop offset="1" stop-color="#14b014"/></linearGradient></defs></svg>
<div style="left:98px;top:0px;width:927px;height:18px;background:#161616"></div>
<div class="ac" style="top:0px"></div>
<div class="m md" style="left:4px;top:1px;color:#00e8ff">147EDB</div>
<div class="m md" style="left:101px;top:1px;color:#00ee00">E8540C0000</div>
<div class="m md" style="left:281px;top:1px;color:#00ee00">CALL 0X00548B34</div>
<svg style="left:242.5px;top:5px" width="13" height="9" viewBox="0 0 13 9"><path d="M0 0H13L6.5 9Z" fill="url(#tg)"/></svg>
<div style="left:98px;top:18px;width:927px;height:18px;background:#161616"></div>
<div class="ac" style="top:18px"></div>
<div class="m md" style="left:4px;top:19px;color:#fff">147EE0</div>
<div class="m md" style="left:101px;top:19px;color:#00ee00">E98EFEFFFF</div>
<div class="m md" style="left:281px;top:19px;color:#00ee00">JMP 0X00547D73</div>
<svg style="left:242px;top:22px" width="13" height="9" viewBox="0 0 13 9"><path d="M0 9H13L6.5 0Z" fill="url(#tg)"/></svg>
<div class="ac" style="top:36px"></div>
<div class="m md" style="left:4px;top:37px;color:#fff">147EE5</div>
<div class="m md" style="left:101px;top:37px;color:#00ee00">3B0DFC4F5C00</div>
<div class="m md" style="left:281px;top:37px;color:#00ee00">CMP ECX, [0X5C4FFC]</div>
<div style="left:98px;top:54px;width:927px;height:18px;background:#161616"></div>
<div class="ac" style="top:54px"></div>
<div class="m md" style="left:4px;top:55px;color:#fff">147EEB</div>
<div class="m md" style="left:101px;top:55px;color:#f8e800">F27502</div>
<div class="m md" style="left:281px;top:55px;color:#f8e800">JNZ SHORT 0X00547EF0</div>
<svg style="left:242.5px;top:59px" width="13" height="9" viewBox="0 0 13 9"><path d="M0 0H13L6.5 9Z" fill="url(#tg)"/></svg>
<div class="ac" style="top:72px"></div>
<div class="m md" style="left:4px;top:73px;color:#fff">147EEE</div>
<div class="m md" style="left:101px;top:73px;color:#2080ff">F2C3</div>
<div class="m md" style="left:281px;top:73px;color:#2080ff">REPNE RET</div>
<div style="left:98px;top:90px;width:927px;height:18px;background:#161616"></div>
<div class="ac" style="top:90px"></div>
<div class="m md" style="left:4px;top:91px;color:#fff">147EF0</div>
<div class="m md" style="left:101px;top:91px;color:#00ee00">F2E930090000</div>
<div class="m md" style="left:281px;top:91px;color:#00ee00">JMP 0X00548826</div>
<svg style="left:242.5px;top:95px" width="13" height="9" viewBox="0 0 13 9"><path d="M0 0H13L6.5 9Z" fill="url(#tg)"/></svg>
<div class="ac" style="top:108px"></div>
<div class="m md" style="left:4px;top:109px;color:#fff">147EF6</div>
<div class="m md" style="left:101px;top:109px;color:#00ee00">55</div>
<div class="m md" style="left:281px;top:109px;color:#00ee00">PUSH EBP</div>
<div class="ac" style="top:126px"></div>
<div class="m md" style="left:4px;top:127px;color:#fff">147EF7</div>
<div class="m md" style="left:101px;top:127px;color:#00ee00">8BEC</div>
<div class="m md" style="left:281px;top:127px;color:#00ee00">MOV EBP, ESP</div>
<div class="ac" style="top:144px"></div>
<div class="m md" style="left:4px;top:145px;color:#fff">147EF9</div>
<div class="m md" style="left:101px;top:145px;color:#00ee00">8B4508</div>
<div class="m md" style="left:281px;top:145px;color:#00ee00">MOV EAX, [EBP+0X8]</div>
<div class="ac" style="top:162px"></div>
<div class="m md" style="left:4px;top:163px;color:#fff">147EFC</div>
<div class="m md" style="left:101px;top:163px;color:#00ee00">56</div>
<div class="m md" style="left:281px;top:163px;color:#00ee00">PUSH ESI</div>
<div class="ac" style="top:180px"></div>
<div class="m md" style="left:4px;top:181px;color:#fff">147EFD</div>
<div class="m md" style="left:101px;top:181px;color:#00ee00">8B483C</div>
<div class="m md" style="left:281px;top:181px;color:#00ee00">MOV ECX, [EAX+0X3C]</div>
<div class="ac" style="top:198px"></div>
<div class="m md" style="left:4px;top:199px;color:#fff">147F00</div>
<div class="m md" style="left:101px;top:199px;color:#00ee00">03C8</div>
<div class="m md" style="left:281px;top:199px;color:#00ee00">ADD ECX, EAX</div>
<div class="ac" style="top:216px"></div>
<div class="m md" style="left:4px;top:217px;color:#fff">147F02</div>
<div class="m md" style="left:101px;top:217px;color:#00ee00">0FB74114</div>
<div class="m md" style="left:281px;top:217px;color:#00ee00">MOVZX EAX, WORD [ECX+0X14]</div>
<div class="ac" style="top:234px"></div>
<div class="m md" style="left:4px;top:235px;color:#fff">147F06</div>
<div class="m md" style="left:101px;top:235px;color:#00ee00">8D5118</div>
<div class="m md" style="left:281px;top:235px;color:#00ee00">LEA EDX, [ECX+0X18]</div>
<div class="ac" style="top:252px"></div>
<div class="m md" style="left:4px;top:253px;color:#fff">147F09</div>
<div class="m md" style="left:101px;top:253px;color:#00ee00">03D0</div>
<div class="m md" style="left:281px;top:253px;color:#00ee00">ADD EDX, EAX</div>
<div class="ac" style="top:270px"></div>
<div class="m md" style="left:4px;top:271px;color:#fff">147F0B</div>
<div class="m md" style="left:101px;top:271px;color:#00ee00">0FB74106</div>
<div class="m md" style="left:281px;top:271px;color:#00ee00">MOVZX EAX, WORD [ECX+0X6]</div>
<div class="ac" style="top:288px"></div>
<div class="m md" style="left:4px;top:289px;color:#fff">147F0F</div>
<div class="m md" style="left:101px;top:289px;color:#00ee00">6BF028</div>
<div class="m md" style="left:281px;top:289px;color:#00ee00">IMUL ESI, EAX, 0X28</div>
<div class="ac" style="top:306px"></div>
<div class="m md" style="left:4px;top:307px;color:#fff">147F12</div>
<div class="m md" style="left:101px;top:307px;color:#00ee00">03F2</div>
<div class="m md" style="left:281px;top:307px;color:#00ee00">ADD ESI, EDX</div>
<div class="ac" style="top:324px"></div>
<div class="m md" style="left:4px;top:325px;color:#fff">147F14</div>
<div class="m md" style="left:101px;top:325px;color:#00ee00">3BD6</div>
<div class="m md" style="left:281px;top:325px;color:#00ee00">CMP EDX, ESI</div>
<div style="left:98px;top:342px;width:927px;height:18px;background:#161616"></div>
<div class="ac" style="top:342px"></div>
<div class="m md" style="left:4px;top:343px;color:#fff">147F16</div>
<div class="m md" style="left:101px;top:343px;color:#f8e800">7419</div>
<div class="m md" style="left:281px;top:343px;color:#f8e800">JZ SHORT 0X00547F31</div>
<svg style="left:242.5px;top:347px" width="13" height="9" viewBox="0 0 13 9"><path d="M0 0H13L6.5 9Z" fill="url(#tg)"/></svg>
<div class="ac" style="top:360px"></div>
<div class="m md" style="left:4px;top:361px;color:#fff">147F18</div>
<div class="m md" style="left:101px;top:361px;color:#00ee00">8B4D0C</div>
<div class="m md" style="left:281px;top:361px;color:#00ee00">MOV ECX, [EBP+0XC]</div>
<div class="ac" style="top:378px"></div>
<div class="m md" style="left:4px;top:379px;color:#fff">147F1B</div>
<div class="m md" style="left:101px;top:379px;color:#00ee00">3B4A0C</div>
<div class="m md" style="left:281px;top:379px;color:#00ee00">CMP ECX, [EDX+0XC]</div>
<div style="left:98px;top:396px;width:927px;height:18px;background:#161616"></div>
<div class="ac" style="top:396px"></div>
<div class="m md" style="left:4px;top:397px;color:#fff">147F1E</div>
<div class="m md" style="left:101px;top:397px;color:#f8e800">720A</div>
<div class="m md" style="left:281px;top:397px;color:#f8e800">JB SHORT 0X00547F2A</div>
<svg style="left:242.5px;top:401px" width="13" height="9" viewBox="0 0 13 9"><path d="M0 0H13L6.5 9Z" fill="url(#tg)"/></svg>
</div>
<div class="sb" style="left:1277px;top:277px;width:16px;height:424px"></div>
<div style="left:1276px;top:277px;width:1px;height:425px;background:#fff"></div>
<div style="left:1276px;top:701px;width:17px;height:1px;background:#fff"></div>
<svg style="left:1280px;top:282.5px" width="9" height="7" viewBox="0 0 9 7"><path d="M1.6 5.6 L4.5 2 L7.4 5.6" stroke="#505050" stroke-width="2.1" fill="none"/></svg>
<svg style="left:1280px;top:690px" width="9" height="7" viewBox="0 0 9 7"><path d="M1.6 1.6 L4.5 5.2 L7.4 1.6" stroke="#505050" stroke-width="2.1" fill="none"/></svg>
<div class="th" style="left:1277px;top:294px;width:16px;height:45px"></div>
<div style="left:1280px;top:311px;width:9px;height:10px;background:#f0f0f0"></div>
<div style="left:1302px;top:52px;width:43px;height:656px;background:#fff"></div>
<div style="left:1303px;top:52px;width:42px;height:655px;background:#000"></div>
<div style="left:1345px;top:0;width:1px;height:728px;background:#3a3440"></div>
<div style="left:0;top:0;width:1346px;height:1px;background:#000"></div>
<div style="left:0;top:0;width:1px;height:728px;background:#1a2030"></div>
<div style="left:0;top:727px;width:1346px;height:1px;background:#000"></div>
<div style="left:1316px;top:62px;width:17px;height:269px;background:#000064;border-top:1px solid #7878ee;border-right:1px solid #7878ee"></div>
<div style="left:1316px;top:331px;width:17px;height:59px;background:#646400;border-top:1px solid #e4e464;border-right:1px solid #e4e464"></div>
<div style="left:1316px;top:390px;width:17px;height:4px;background:#006400;border-top:1px solid #64e464;border-right:1px solid #64e464"></div>
<div style="left:1316px;top:394px;width:17px;height:20px;background:#640000;border-top:1px solid #e46a6a;border-right:1px solid #e46a6a"></div>
<div style="left:1316px;top:414px;width:17px;height:259px;background:#646400;border-top:1px solid #e4e464;border-right:1px solid #e4e464"></div>
<div style="left:1316px;top:673px;width:17px;height:23px;background:#006400;border-top:1px solid #64e464;border-right:1px solid #64e464"></div>
<div style="left:1315px;top:62px;width:1px;height:635px;background:#c0c0c0"></div>
<div style="left:1315px;top:696px;width:18px;height:1px;background:#c0c0c0"></div>
<div style="left:1303px;top:62px;width:42px;height:1px;background:repeating-linear-gradient(90deg,#e4e4e4 0,#e4e4e4 4px,transparent 4px,transparent 6px)"></div>
<div style="left:1303px;top:300px;width:42px;height:1px;background:#ff8080"></div>
<div style="left:1303px;top:301px;width:42px;height:1px;background:#8a9098;opacity:.8"></div>
<div class="t" style="left:1308px;top:287px;font-size:11px;color:#ff0000;letter-spacing:-.2px">1472DB</div>
</div></body></html>
